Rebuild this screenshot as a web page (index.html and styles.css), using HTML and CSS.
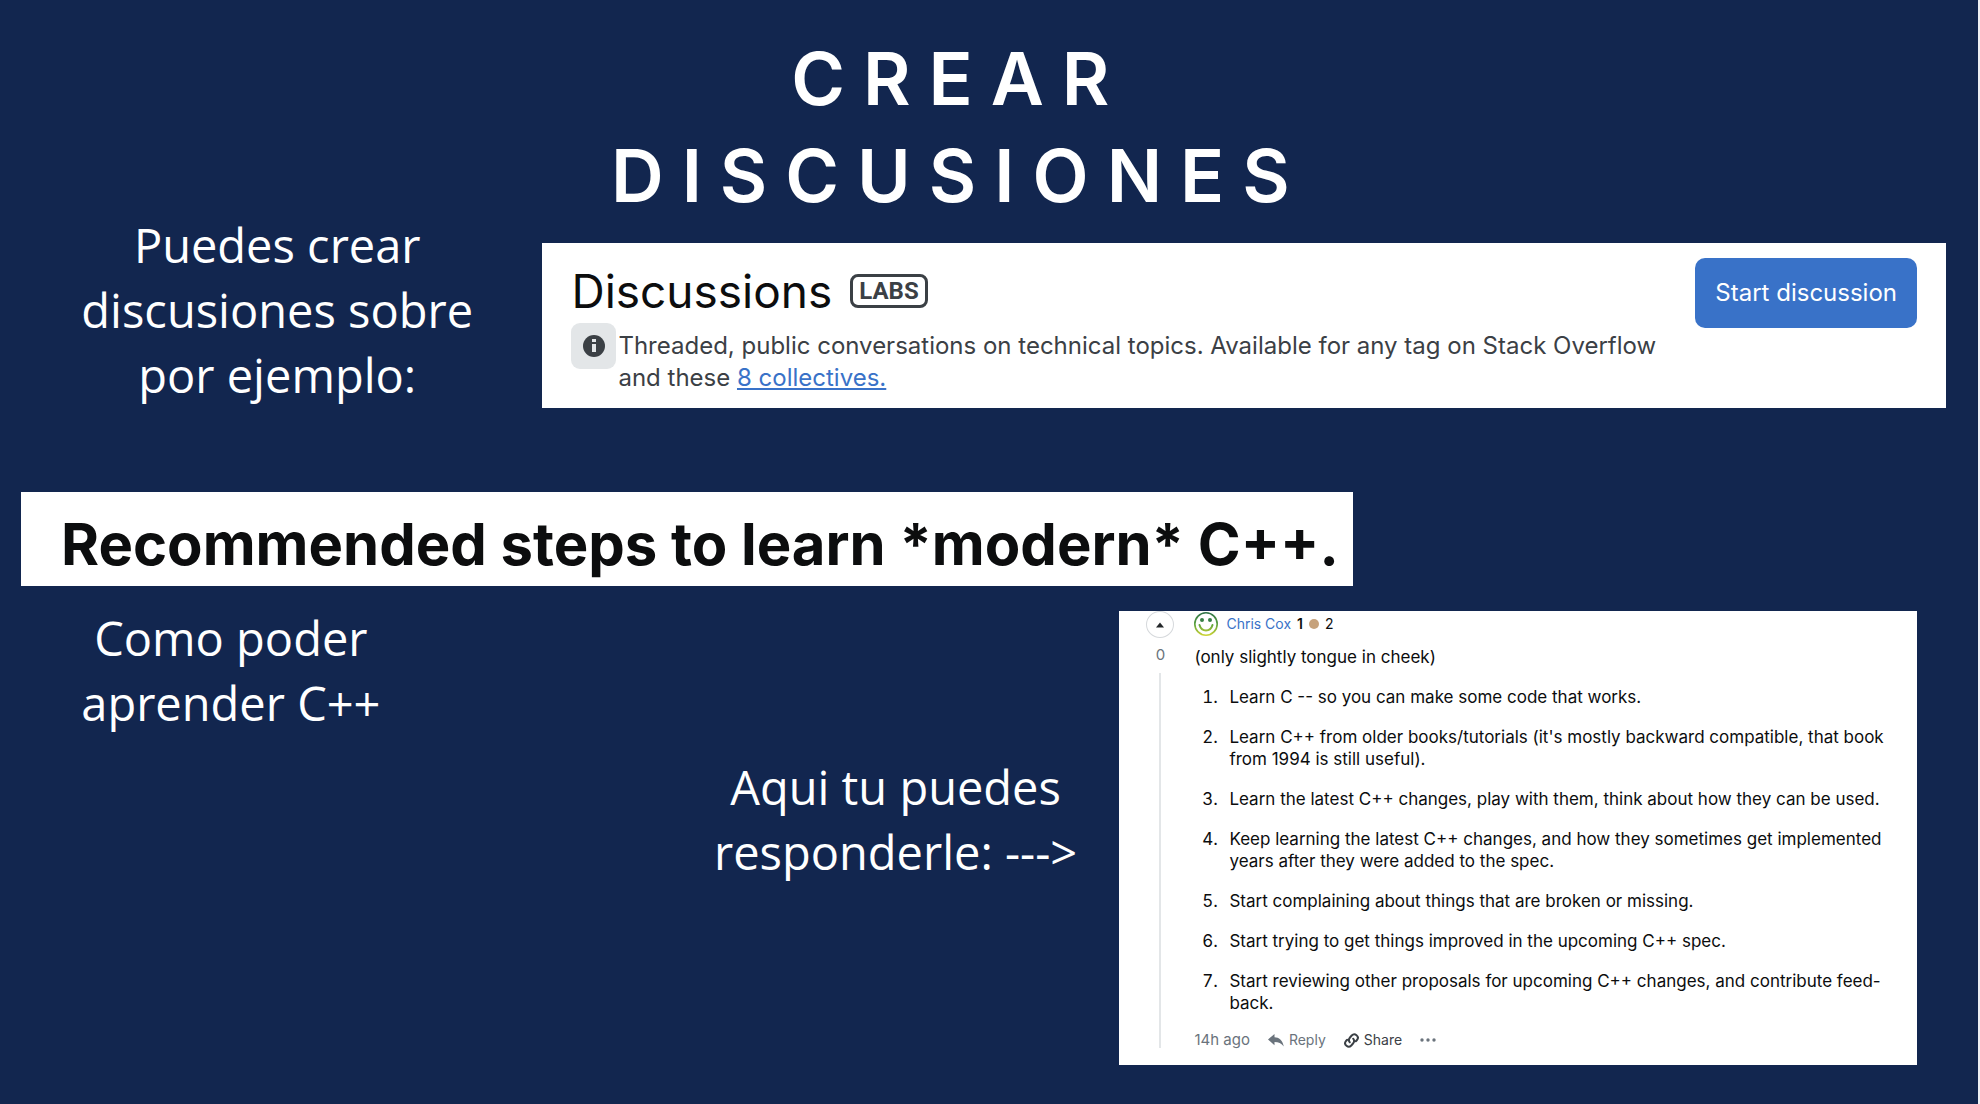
FILE: index.html
```html
<!DOCTYPE html>
<html lang="es">
<head>
<meta charset="utf-8">
<meta name="viewport" content="width=device-width, initial-scale=1">
<title>Crear discusiones</title>
<link rel="stylesheet" href="styles.css">
</head>
<body>
<main class="slide">
  <h1 class="title">CREAR<br>DISCUSIONES</h1>

  <section class="intro">
    <p class="note">Puedes crear<br>discusiones sobre<br>por ejemplo:</p>
    <article class="card banner">
      <div class="banner-text">
        <div class="banner-head">
          <h2 class="banner-title">Discussions</h2>
          <span class="labs">LABS</span>
        </div>
        <div class="banner-info">
          <span class="info-box">
            <svg class="info-icon" viewBox="0 0 22 22" aria-hidden="true"><circle cx="11" cy="11" r="11" fill="#3b4045"/><path fill="#e3e6e8" d="M9 4h4v3H9zM9 9h4v8H9z"/></svg>
          </span>
          <p class="banner-desc">Threaded, public conversations on technical topics. Available for any tag on Stack Overflow<br>and these <a class="link" href="#">8 collectives.</a></p>
        </div>
      </div>
      <button class="start" type="button">Start discussion</button>
    </article>
  </section>

  <section class="question">
    <h2 class="card question-title">Recommended steps to learn *modern* C++.</h2>
  </section>

  <section class="answer">
    <p class="note">Como poder<br>aprender C++</p>
    <p class="note note-reply">Aqui tu puedes<br>responderle: ---&gt;</p>
    <article class="card reply">
      <div class="votes">
        <button class="vote" type="button" aria-label="Upvote">
          <svg class="vote-icon" viewBox="0 0 10 6" aria-hidden="true"><path fill="#232629" d="M1 5.5 5 .5l4 5z"/></svg>
        </button>
        <span class="score">0</span>
        <span class="thread"></span>
      </div>
      <div class="reply-body">
        <div class="author">
          <svg class="avatar" viewBox="0 0 24 24" aria-hidden="true">
            <defs><linearGradient id="smile" x1="0" y1="0" x2="0" y2="24" gradientUnits="userSpaceOnUse"><stop offset="0" stop-color="#2c7048"/><stop offset=".5" stop-color="#58a03c"/><stop offset="1" stop-color="#d2d634"/></linearGradient></defs>
            <g fill="none" stroke="url(#smile)"><circle cx="12" cy="12" r="11.2" stroke-width="1.6"/><path stroke-width="2" stroke-linecap="round" d="M5.500 13c1 3.500 3.500 5.500 6.500 5.500s5.500-2 6.500-5.500"/></g>
            <circle cx="8" cy="8" r="2" fill="#388047"/><circle cx="16" cy="8" r="2" fill="#388047"/>
          </svg>
          <a class="name" href="#">Chris Cox</a>
          <strong class="rep">1</strong>
          <span class="badge"></span>
          <span>2</span>
        </div>
        <p class="lead">(only slightly tongue in cheek)</p>
        <ol class="steps">
          <li>Learn C -- so you can make some code that works.</li>
          <li>Learn C++ from older books/tutorials (it's mostly backward compatible, that book<br>from 1994 is still useful).</li>
          <li>Learn the latest C++ changes, play with them, think about how they can be used.</li>
          <li>Keep learning the latest C++ changes, and how they sometimes get implemented<br>years after they were added to the spec.</li>
          <li>Start complaining about things that are broken or missing.</li>
          <li>Start trying to get things improved in the upcoming C++ spec.</li>
          <li>Start reviewing other proposals for upcoming C++ changes, and contribute feed-<br>back.</li>
        </ol>
        <div class="actions">
          <span>14h ago</span>
          <button class="action" type="button"><svg class="reply-icon" viewBox="0 0 16 13" aria-hidden="true"><path fill="#6a737c" d="M0 5.500 6.500 0v3.300c4.500 0 8 2.700 9.300 9.200C13.500 9.300 10.500 8 6.500 8v3.300z"/></svg>Reply</button>
          <button class="action share" type="button"><svg class="share-icon" viewBox="0 0 15 15" aria-hidden="true"><g fill="none" stroke="#3b4045" stroke-width="2" stroke-linecap="round"><path d="M5.800 9.300C4.500 7.800 4.700 6 6 4.500l1.700-2C9 1.200 11 1 12.500 2.200s1.700 3.300.5 4.800l-1.200 1.300"/><path d="M9.200 5.700c1.300 1.500 1.100 3.300-.2 4.800l-1.700 2C6 13.800 4 14 2.500 12.800S.8 9.500 2 8l1.200-1.300"/></g></svg>Share</button>
          <button class="action" type="button" aria-label="More"><svg class="more-icon" viewBox="0 0 16 4" aria-hidden="true"><g fill="#6a737c"><circle cx="2" cy="2" r="1.700"/><circle cx="8" cy="2" r="1.700"/><circle cx="14" cy="2" r="1.700"/></g></svg></button>
        </div>
      </div>
    </article>
  </section>
</main>
</body>
</html>
```
FILE: styles.css
```css
* { box-sizing: border-box; }

body {
  margin: 0;
  background: #12264f;
  color: #fff;
  font-family: Inter, "Liberation Sans", sans-serif;
}

h1, h2, p, ol { margin: 0; padding: 0; }

button {
  border: 0;
  padding: 0;
  background: none;
  font: inherit;
  color: inherit;
}

.slide {
  min-height: 100vh;
  padding: 30px 0 36px;
  border-right: 2px solid #eef0f4;
}

.title {
  padding-right: 3%;
  font-size: 73px;
  line-height: 97px;
  font-weight: 600;
  letter-spacing: 18px;
  text-align: center;
}

.note {
  font: 400 47px/65px "Open Sans", sans-serif;
  text-align: center;
}

.card { background: #fff; color: #0c0d0e; }

/* Discussions banner */
.intro {
  display: grid;
  grid-template-columns: 543fr 1405fr;
  align-items: end;
  margin-top: -11px;
  padding-right: 32px;
}
.intro .note { padding-left: 12px; }

.banner {
  display: flex;
  justify-content: space-between;
  align-items: flex-start;
  padding: 15px 29px 14px;
}
.banner-text { padding-top: 8px; }
.banner-head { display: flex; align-items: center; gap: 18px; }
.banner-title { font-size: 46px; line-height: 50px; font-weight: 400; }
.labs {
  padding: 0 6px;
  border: 3px solid #3b4045;
  border-radius: 8px;
  font: 700 24px/28px Roboto, sans-serif;
  color: #3b4045;
}
.banner-info { display: flex; gap: 2px; padding-top: 7px; }
.info-box {
  display: grid;
  place-items: center;
  width: 45px;
  height: 46px;
  border-radius: 9px;
  background: #e3e6e8;
}
.info-icon { width: 22px; height: 22px; }
.banner-desc { padding-top: 7px; font-size: 24px; line-height: 32px; color: #3b4045; }
.link { color: #3972c8; text-decoration: underline; }
.start {
  padding: 0 20px;
  border-radius: 10px;
  background: #3972c8;
  color: #fff;
  font-size: 24px;
  line-height: 70px;
  white-space: nowrap;
}

/* Question title */
.question { display: flex; margin-top: 84px; padding-left: 21px; }
.question-title {
  padding: 17px 14px 7px 40px;
  font-size: 58px;
  line-height: 70px;
  font-weight: 700;
}

/* Answer */
.answer {
  display: grid;
  grid-template-columns: 462fr 658fr 798fr;
  align-items: start;
  margin-top: 20px;
  padding-right: 61px;
}
.answer .note-reply { padding: 149px 0 0 210px; }

.reply {
  display: flex;
  gap: 20px;
  margin-top: 5px;
  padding: 0 20px 17px 27px;
}
.votes { display: flex; flex-direction: column; align-items: center; width: 28px; }
.vote {
  display: grid;
  place-items: center;
  width: 28px;
  height: 27px;
  border: 1px solid #d6d9dc;
  border-radius: 50%;
}
.vote-icon { width: 10px; height: 6px; }
.score { padding: 7px 0 8px; font-size: 15px; line-height: 20px; color: #6a737c; }
.thread { flex: 1; width: 2px; background: #e3e6e8; }

.reply-body { flex: 1; font-size: 17px; line-height: 22px; }
.author { display: flex; align-items: center; gap: 6px; height: 25px; font-size: 14px; }
.avatar { width: 24px; height: 24px; }
.name { padding-left: 2px; color: #3972c8; text-decoration: none; }
.rep { font-weight: 600; }
.badge { width: 10px; height: 10px; border-radius: 50%; background: #c6a27c; }
.lead { padding: 10px 0 18px; }
.steps { padding-left: 28px; }
.steps li { margin-bottom: 18px; padding-left: 7px; }
.actions {
  display: flex;
  align-items: center;
  gap: 18px;
  font-size: 15px;
  line-height: 16px;
  color: #6a737c;
}
.action { display: flex; align-items: center; gap: 5px; font-size: 14px; }
.share { color: #3b4045; }
.reply-icon { width: 16px; height: 13px; }
.share-icon { width: 15px; height: 15px; }
.more-icon { width: 16px; height: 4px; }
```
